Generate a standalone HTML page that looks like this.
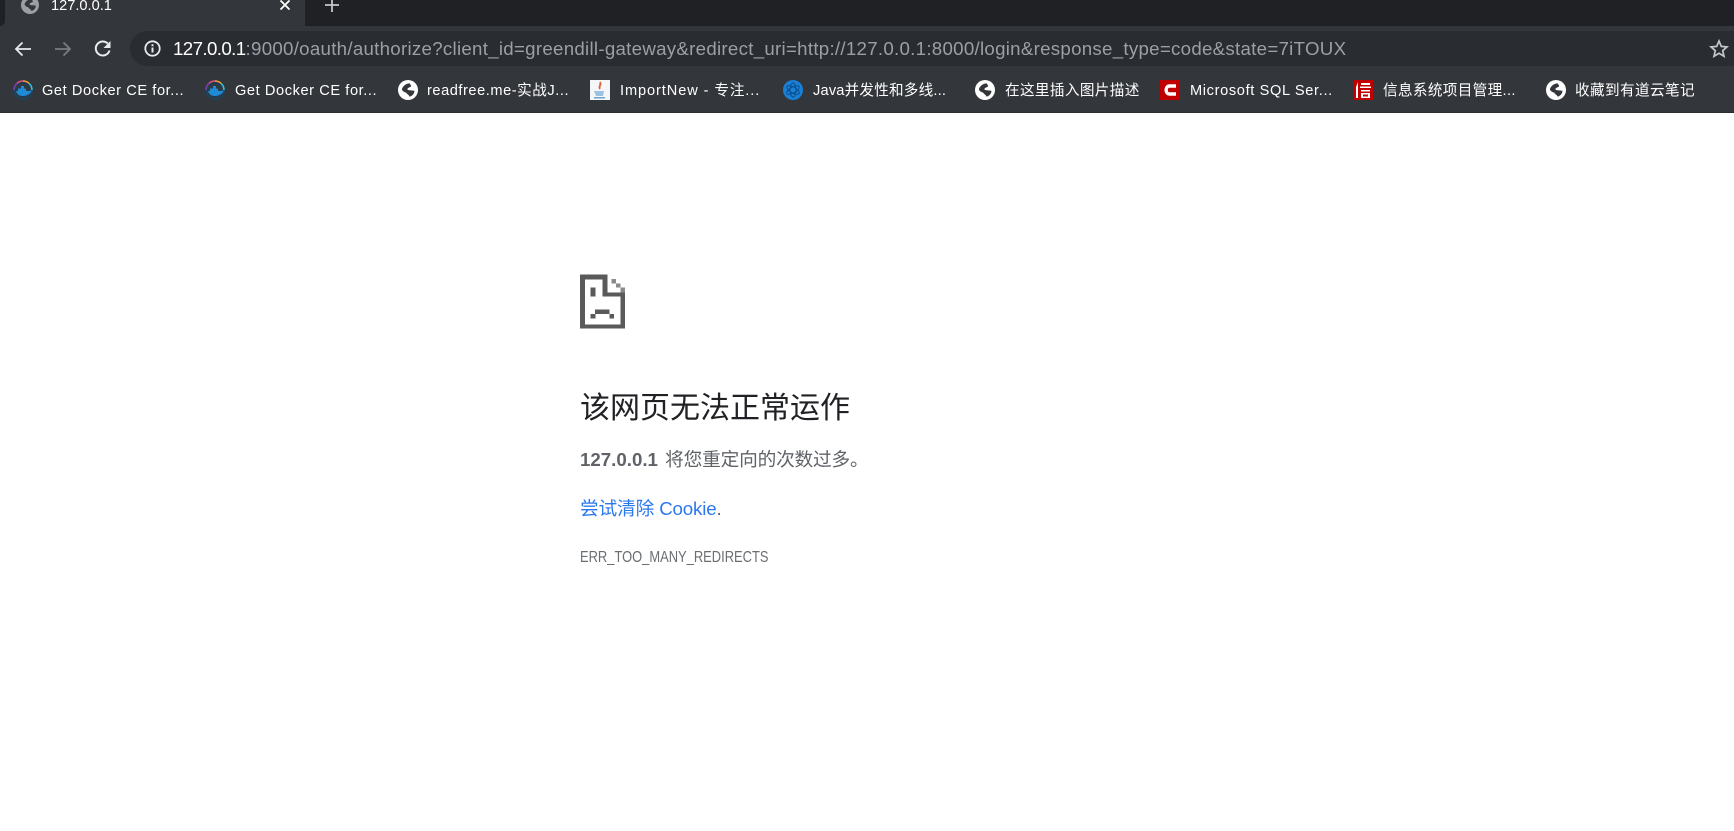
<!DOCTYPE html>
<html><head><meta charset="utf-8"><style>
html,body{margin:0;padding:0;width:1734px;height:831px;overflow:hidden;background:#fff;font-family:"Liberation Sans","Noto Sans CJK SC",sans-serif}
.a{position:absolute;white-space:nowrap}
.bm{position:absolute;top:82px;font-size:14.6px;line-height:18px;color:#fff;white-space:nowrap}
svg{position:absolute;display:block}
</style></head><body>
<svg width="0" height="0" style="position:absolute"><defs>
<symbol id="docker" viewBox="0 0 20 20"><circle cx="10" cy="10" r="9" fill="#2a3a46"/><g fill="none" stroke-width="1.600"><path d="M1 10A9 9 0 0 0 10 19A9 9 0 0 0 19 10" stroke="#1c4560"/><path d="M1 10A9 9 0 0 1 4 3.300" stroke="#7a3fb0"/><path d="M4 3.300A9 9 0 0 1 10 1" stroke="#e0507a"/><path d="M10 1A9 9 0 0 1 16 3.300" stroke="#e8a040"/><path d="M16 3.300A9 9 0 0 1 19 10" stroke="#2fc0d8"/></g><path d="M3 11h13.500c.8-.8 1.500-.8 2-.5-.5 3-4 5.500-9 5.500-3.500 0-5.500-2-6.500-5z" fill="#1f8ad6"/><path d="M5 8.500h8V11H5zM8 6h3v2.500H8z" fill="#1f8ad6"/></symbol>
<symbol id="globe" viewBox="0 0 18 18"><circle cx="9" cy="9" r="9" fill="#fff"/><path d="M3.500 8.500C4 5.500 7.500 3 10.500 3L12 5.500C10.500 7 8.500 6.800 8.500 8.300 8.500 9.600 12 9 14.800 9.800 14.800 12.300 12.800 14.500 10.500 15 10 13.300 8 13 7.300 11.300 6 11 4.300 10.300 3.500 8.500z" fill="#33363a"/></symbol>
</defs></svg>
<div class="a" style="left:0;top:0;width:1734px;height:26px;background:#202124"></div>
<div class="a" style="left:0;top:0;width:305px;height:40px;background:#33363a"></div>
<div class="a" style="left:0;top:0;width:5px;height:26px;background:#202124;border-radius:0 0 5px 0"></div>
<div class="a" style="left:305px;top:0;width:1429px;height:26px;background:#202124;border-radius:0 0 0 9px"></div>
<div class="a" style="left:0;top:26px;width:1734px;height:86px;background:#33363a"></div>
<div class="a" style="left:0;top:112px;width:1734px;height:1px;background:#2a2c2f"></div>
<div class="a" style="left:130px;top:31px;width:1604px;height:35px;background:#292c30;border-radius:18px 0 0 18px"></div>

<svg style="left:21px;top:-4px" width="18" height="18" viewBox="0 0 18 18"><circle cx="9" cy="9" r="9" fill="#9aa0a6"/><path d="M3.500 8.500C4 5.500 7.500 3 10.500 3L12 5.500C10.500 7 8.500 6.800 8.500 8.300 8.500 9.600 12 9 14.800 9.800 14.800 12.300 12.800 14.500 10.500 15 10 13.300 8 13 7.300 11.300 6 11 4.300 10.300 3.500 8.500z" fill="#33363a"/></svg>
<div class="a" style="left:51px;top:-3px;font-size:14.6px;line-height:18px;color:#fff">127.0.0.1</div>
<svg style="left:279px;top:-1px" width="12" height="12" viewBox="0 0 12 12"><path d="M1.500 1.500l9 9M10.500 1.500l-9 9" stroke="#fff" stroke-width="1.800"/></svg>
<svg style="left:325px;top:-2px" width="14" height="14" viewBox="0 0 14 14"><path d="M7 0v14M0 7h14" stroke="#c4c7ca" stroke-width="1.800"/></svg>

<svg style="left:13px;top:40px" width="20" height="18" viewBox="0 0 20 18"><path d="M18 9H3M9.500 2.500L3 9l6.500 6.500" stroke="#e8eaed" stroke-width="1.800" fill="none"/></svg>
<svg style="left:53px;top:40px" width="20" height="18" viewBox="0 0 20 18"><path d="M2 9h15M10.500 2.500L17 9l-6.500 6.500" stroke="#7a7d80" stroke-width="1.800" fill="none"/></svg>
<svg style="left:93px;top:39px" width="20" height="20" viewBox="0 0 20 20"><path d="M16.500 11.500A7 7 0 1 1 14.800 4.600" stroke="#e8eaed" stroke-width="2" fill="none"/><path d="M17.500 2v7h-7z" fill="#e8eaed"/></svg>
<svg style="left:144px;top:40px" width="17" height="17" viewBox="0 0 17 17"><circle cx="8.500" cy="8.500" r="7.200" stroke="#e8eaed" stroke-width="1.800" fill="none"/><path d="M7.500 7.500h2v5h-2zM7.500 4.300h2v2h-2z" fill="#e8eaed"/></svg>
<div class="a" style="left:173px;top:37px;font-size:18.700px;line-height:24px;color:#9aa0a6;letter-spacing:.28px"><span style="color:#fff;letter-spacing:-.6px">127.0.0.1</span>:9000/oauth/authorize?client_id=greendill-gateway&amp;redirect_uri=http://127.0.0.1:8000/login&amp;response_type=code&amp;state=7iTOUX</div>
<svg style="left:1709px;top:39px" width="20" height="19" viewBox="0 0 20 19"><path d="M10 2l2.300 5.400 5.700.5-4.300 3.800 1.300 5.600L10 14.300l-5 3 1.300-5.600L2 7.900l5.700-.5z" fill="none" stroke="#c4c7ca" stroke-width="1.700"/></svg>

<svg style="left:13px;top:80px" width="20" height="20"><use href="#docker"/></svg>
<div class="bm" style="left:42px;letter-spacing:.58px">Get Docker CE for...</div>
<svg style="left:205px;top:80px" width="20" height="20"><use href="#docker"/></svg>
<div class="bm" style="left:235px;letter-spacing:.58px">Get Docker CE for...</div>
<svg style="left:398px;top:80px" width="20" height="20"><use href="#globe"/></svg>
<div class="bm" style="left:427px;letter-spacing:.55px">readfree.me-实战J...</div>
<svg style="left:590px;top:80px" width="20" height="20" viewBox="0 0 20 20"><rect width="20" height="20" fill="#f4f6f8"/><path d="M10 2c2 3-2 4 0 7" stroke="#d9603c" stroke-width="1.800" fill="none"/><path d="M4 11h10l-1 5H6z" fill="#9cc4e2"/><path d="M4 17h11v1.500H4z" fill="#6ea4cc"/></svg>
<div class="bm" style="left:620px;letter-spacing:.9px">ImportNew - 专注...</div>
<svg style="left:783px;top:80px" width="20" height="20" viewBox="0 0 20 20"><circle cx="10" cy="10" r="10" fill="#1a7fd6"/><g fill="none" stroke="#0c4f8f" stroke-width="1"><ellipse cx="10" cy="10" rx="3" ry="7"/><ellipse cx="10" cy="10" rx="3" ry="7" transform="rotate(60 10 10)"/><ellipse cx="10" cy="10" rx="3" ry="7" transform="rotate(120 10 10)"/></g></svg>
<div class="bm" style="left:813px;letter-spacing:.2px">Java并发性和多线...</div>
<svg style="left:975px;top:80px" width="20" height="20"><use href="#globe"/></svg>
<div class="bm" style="left:1005px;letter-spacing:.37px">在这里插入图片描述</div>
<svg style="left:1160px;top:80px" width="20" height="20" viewBox="0 0 20 20"><rect width="20" height="20" fill="#c00000"/><path d="M16 6H9.500c-4.500 0-4.500 8 0 8H16" stroke="#fff" stroke-width="3.400" fill="none"/></svg>
<div class="bm" style="left:1190px;letter-spacing:.64px">Microsoft SQL Ser...</div>
<svg style="left:1353px;top:80px" width="20" height="20" viewBox="0 0 20 20"><rect width="20" height="20" fill="#c00000"/><path d="M5 2L3 7v11h2V2zM8 3h9v2H8zM7 6.500h11v1.500H7zM8 10h9v1.500H8zM8 13h9v5H8z" fill="#fff"/><rect x="10" y="14.500" width="5" height="2" fill="#c00000"/></svg>
<div class="bm" style="left:1383px;letter-spacing:.35px">信息系统项目管理...</div>
<svg style="left:1546px;top:80px" width="20" height="20"><use href="#globe"/></svg>
<div class="bm" style="left:1575px;letter-spacing:.4px">收藏到有道云笔记</div>

<svg style="left:570px;top:265px" width="70" height="70" viewBox="0 0 210 210" shape-rendering="crispEdges"><path fill="#5a5a5a" d="M30 28h82v15H45v135h107V95H97V28h15v54h53v108H30zM62 68h15v27H62zM75 133h43v14H75zM62 147h15v13H62zM118 147h14v13h-14z"/><path fill="#8a8a8a" d="M125 42h13v13h-13zM138 55h14v13h-14zM152 68h13v14h-13z"/></svg>

<div class="a" style="left:580px;top:388px;font-size:30px;line-height:42px;color:#202124">该网页无法正常运作</div>
<div class="a" style="left:580px;top:447px;font-size:18.700px;line-height:26px;color:#5f6368"><b>127.0.0.1</b> <span style="margin-left:2px;letter-spacing:-.2px">将您重定向的次数过多。</span></div>
<div class="a" style="left:580px;top:496px;font-size:18.700px;line-height:26px;color:#5f6368;letter-spacing:-.15px"><span style="color:#2b78ee">尝试清除 Cookie</span>.</div>
<div class="a" style="left:580px;top:547px;font-size:16px;line-height:22px;color:#6a6e72;transform:scaleX(.807);transform-origin:0 0">ERR_TOO_MANY_REDIRECTS</div>
</body></html>
